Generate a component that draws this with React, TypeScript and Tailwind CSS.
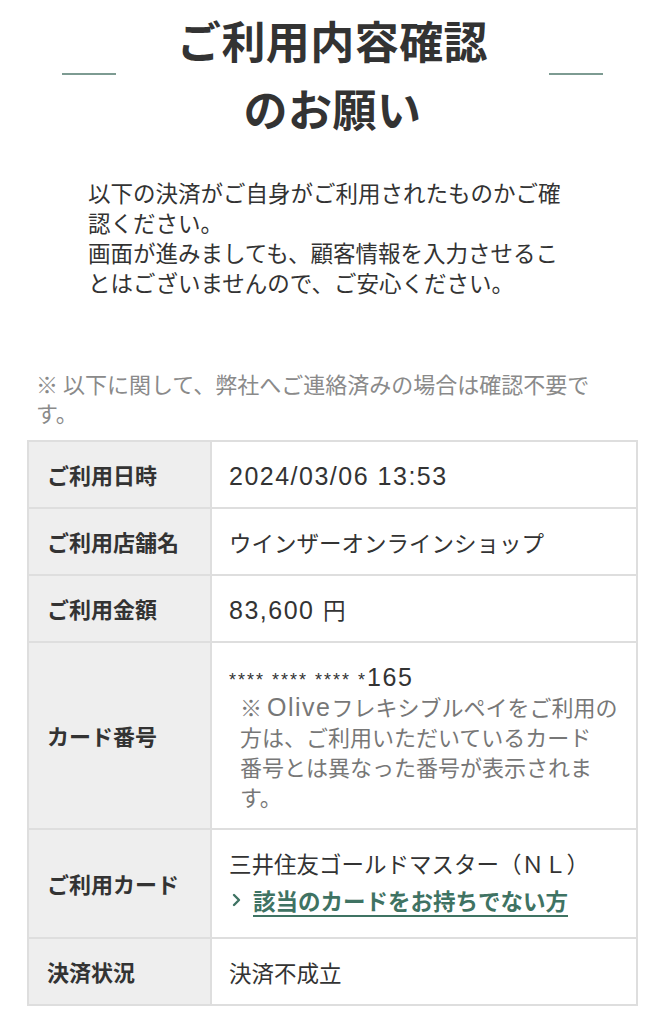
import { ReactNode } from 'react';

// Latin runs are set larger and looser than the CJK text, as in the reference
function Lat({ children }: { children: ReactNode }) {
  return (
    <span className="font-['Liberation_Sans',sans-serif] text-[25px] leading-none tracking-[0.06em]">
      {children}
    </span>
  );
}

function Stars({ children }: { children: ReactNode }) {
  return (
    <span className="font-['Liberation_Sans',sans-serif] text-[18px] leading-none tracking-[2px]">
      {children}
    </span>
  );
}

const rows: { label: string; value: ReactNode }[] = [
  { label: 'ご利用日時', value: <Lat>2024/03/06 13:53</Lat> },
  { label: 'ご利用店舗名', value: 'ウインザーオンラインショップ' },
  {
    label: 'ご利用金額',
    value: (
      <>
        <Lat>83,600 </Lat>円
      </>
    ),
  },
  {
    label: 'カード番号',
    value: (
      <>
        <div>
          <Stars>**** **** **** *</Stars>
          <Lat>165</Lat>
        </div>
        <div className="pl-[11px] text-[#777777] text-[22px]">
          ※ <Lat>Olive</Lat>フレキシブルペイをご利用の
          <br />
          方は、ご利用いただいているカード
          <br />
          番号とは異なった番号が表示されま
          <br />
          す。
        </div>
      </>
    ),
  },
  {
    label: 'ご利用カード',
    value: (
      <>
        <div>三井住友ゴールドマスター（ＮＬ）</div>
        <a href="#" className="mt-[7px] mb-[5px] flex items-center gap-[11px] font-bold text-[#3f7363]">
          <svg width="10" height="14" viewBox="0 0 10 14" fill="none" className="ml-[3px] shrink-0">
            <path d="M2 2l5 5-5 5" stroke="currentColor" strokeWidth="2.4" strokeLinecap="round" strokeLinejoin="round" />
          </svg>
          <span className="underline decoration-2 underline-offset-[5px]">該当のカードをお持ちでない方</span>
        </a>
      </>
    ),
  },
  { label: '決済状況', value: '決済不成立' },
];

export default function App() {
  return (
    <div className="w-[665px] min-h-[1024px] bg-white text-[#333333] font-['Noto_Sans_CJK_JP','Noto_Sans',sans-serif]">
      {/* heading with side rules */}
      <div className="flex items-center px-[62px] pt-[6px]">
        <span className="h-[2px] w-[54px] shrink-0 bg-[#7d9b92]" />
        <h1 className="flex-1 text-center text-[44px] font-bold leading-[68px] tracking-[0.01em]">
          ご利用内容確認
          <br />
          のお願い
        </h1>
        <span className="h-[2px] w-[54px] shrink-0 bg-[#7d9b92]" />
      </div>

      <p className="mt-[35px] ml-[88px] w-[485px] text-[22.5px] leading-[30px]">
        以下の決済がご自身がご利用されたものかご確認ください。
        <br />
        画面が進みましても、顧客情報を入力させることはございませんので、ご安心ください。
      </p>

      <p className="mt-[72px] ml-[36px] w-[580px] text-[22px] leading-[29px] text-[#8a8a8a]">
        ※ 以下に関して、弊社へご連絡済みの場合は確認不要です。
      </p>

      <div className="mt-[13px] ml-[27px] w-[611px] border-2 border-[#dedede]">
        {rows.map((row, i) => (
          <div key={row.label} className={`flex ${i > 0 ? 'border-t-2 border-[#dedede]' : ''}`}>
            <div className="flex w-[183px] shrink-0 items-center border-r-2 border-[#dedede] bg-[#eeeeee] pl-[18px] text-[22px] font-bold">
              {row.label}
            </div>
            <div className="flex-1 pt-[18px] pb-[17px] pl-[17px] pr-[16px] text-[22.5px] leading-[30px]">
              {row.value}
            </div>
          </div>
        ))}
      </div>
    </div>
  );
}
